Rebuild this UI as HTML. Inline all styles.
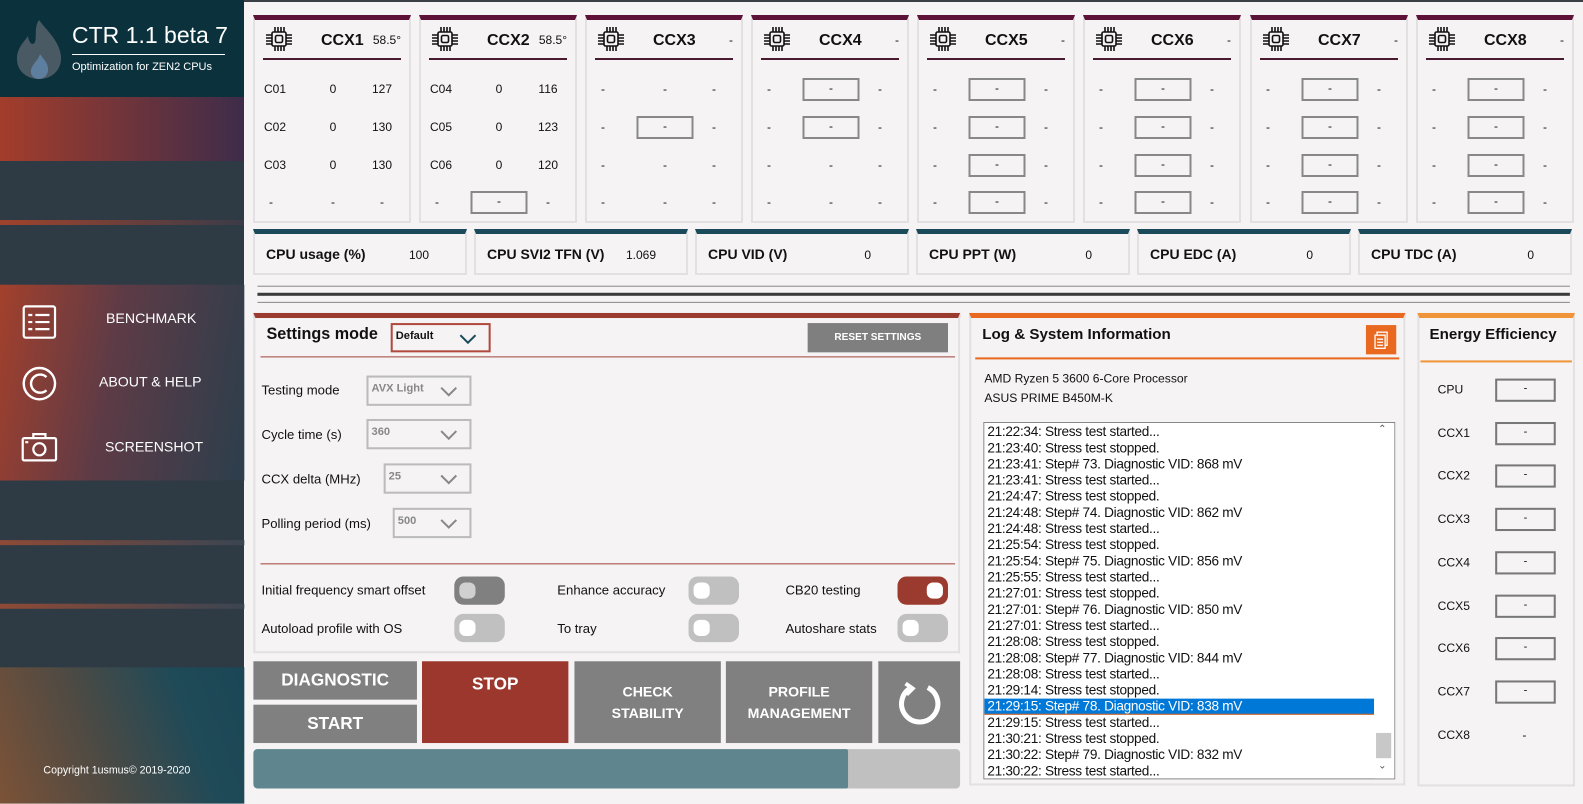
<!DOCTYPE html>
<html><head><meta charset="utf-8"><style>
*{box-sizing:border-box;margin:0;padding:0}
body{width:1583px;height:796px;overflow:hidden;background:#f5f3f3;font-family:"Liberation Sans",sans-serif;font-size:13px;color:#111;position:relative}
.a{position:absolute}
#wrap{position:absolute;left:0;top:0;width:1583px;height:796px;transform:scale(1.00957);transform-origin:0 0}
.pan{position:absolute;background:#f5f3f3;border:2px solid #e2e0e0}
.ccx{top:15px;width:158px;height:208px;border-top:5px solid #5e1238}
.ccx .hd{position:absolute;left:8px;right:8px;top:0;height:40px;border-bottom:2px solid #4a1a30}
.ccx .ic{position:absolute;left:2px;top:5px}
.ccx .t{position:absolute;left:58px;top:12px;font-weight:bold;font-size:16px}
.ccx .tp{position:absolute;right:0;top:13px;font-size:12px}
.c{position:absolute;font-size:12px;transform:translateX(-50%)}
.bx{position:absolute;width:57px;height:23px;border:2px solid #888;transform:translateX(-50%);text-align:center;font-size:12px;line-height:17px}
.st{top:229px;width:214px;height:46px;border-top:5px solid #1b4a5a}
.st b{position:absolute;left:11px;top:12px;font-size:14px}
.st span{position:absolute;right:36px;top:14px;font-size:12px}
.dd{position:absolute;height:30px;border:2px solid #bbb;font-size:11px;color:#888;font-weight:bold;padding:5px 0 0 3px}
.dd svg{position:absolute;right:12px;top:9px}
.lb{position:absolute;font-size:13px}
.tg{position:absolute;width:50px;height:28px;border-radius:9px;background:#c0c0c0}
.tg i{position:absolute;top:6px;left:5px;width:16px;height:16px;border-radius:6px;background:#fff}
.btn{position:absolute;background:#808080;color:#fff;font-weight:bold;text-align:center}
.log div{height:16px;line-height:16px;font-size:13.5px;letter-spacing:-0.3px;padding-left:3px;white-space:nowrap}
</style></head><body>
<div class="a" style="left:0;top:0;width:1583px;height:2px;background:#3a3f45"></div>
<div class="a" style="left:0;top:0;width:244px;height:796px;background:#2e3a44"></div>
<div class="a" style="left:0;top:0;width:244px;height:97px;background:#0b323c"></div>
<div class="a" style="left:0;top:97px;width:244px;height:64px;background:linear-gradient(90deg,#a33d2b,#3e2c4a)"></div>
<div class="a" style="left:0;top:220px;width:244px;height:5px;background:linear-gradient(90deg,#a0432c,#3b3b48)"></div>
<svg class="a" style="left:14px;top:18px" width="50" height="62" viewBox="0 0 50 62"><path d="M25 2 C32 12 45 22 47 38 C48 52 38 61 25 61 C12 61 2 52 3 39 C4 29 10 24 14 18 C15 26 19 28 21 24 C23 18 20 9 25 2Z" fill="#4a5a64"/><path d="M26 36 C30 42 35 46 34 53 C33 58 29 61 25 61 C20 61 16 57 17 52 C18 46 24 43 26 36Z" fill="#5e7ea0"/></svg>
<div class="a" style="left:72px;top:22px;color:#fff;font-size:23px">CTR 1.1 beta 7</div>
<div class="a" style="left:72px;top:54px;width:153px;height:1px;background:#fff"></div>
<div class="a" style="left:72px;top:61px;color:#fff;font-size:11px">Optimization for ZEN2 CPUs</div>

<svg width="0" height="0" style="position:absolute"><defs><g id="chip" fill="none" stroke="#111" stroke-width="1.6"><rect x="7" y="7" width="14" height="14" rx="1.5"/><rect x="10.5" y="10.5" width="7" height="7" rx="1.5"/><path d="M10 2v5M13 2v5M16 2v5M19 2v5M10 21v5M13 21v5M16 21v5M19 21v5M1 10h6M1 13h6M1 16h6M1 19h6M21 10h6M21 13h6M21 16h6M21 19h6"/></g></defs></svg>
<div id="ccxs"></div>

<div class="pan st" style="left:253px"><b>CPU usage (%)</b><span>100</span></div>
<div class="pan st" style="left:474px"><b>CPU SVI2 TFN (V)</b><span style="right:30px">1.069</span></div>
<div class="pan st" style="left:695px"><b>CPU VID (V)</b><span>0</span></div>
<div class="pan st" style="left:916px"><b>CPU PPT (W)</b><span>0</span></div>
<div class="pan st" style="left:1137px"><b>CPU EDC (A)</b><span>0</span></div>
<div class="pan st" style="left:1358px"><b>CPU TDC (A)</b><span>0</span></div>

<div id="wrap">
<div class="a" style="left:0;top:282px;width:242px;height:194px;background:linear-gradient(100deg,#a3402c 0%,#5d3b46 45%,#2c3e4c 100%)"></div>
<div class="a" style="left:0;top:535px;width:242px;height:5px;background:linear-gradient(90deg,#8e4a36,#3b4552)"></div>
<div class="a" style="left:0;top:598px;width:242px;height:5px;background:linear-gradient(90deg,#8e4a36,#3b4552)"></div>
<div class="a" style="left:0;top:661px;width:242px;height:135px;background:linear-gradient(70deg,#7c5237 0%,#4c4a44 40%,#1f4a58 75%,#1b4655 100%)"></div>
<svg class="a" style="left:22px;top:302px" width="34" height="34" viewBox="0 0 34 34" fill="none" stroke="#fff" stroke-width="2.2"><rect x="1.5" y="1.5" width="31" height="31" rx="2"/><path d="M6 10h4M13 10h14M6 17h4M13 17h14M6 24h4M13 24h14"/></svg>
<div class="a" style="left:105px;top:307px;color:#fff;font-size:14px">BENCHMARK</div>
<svg class="a" style="left:21px;top:362px" width="36" height="36" viewBox="0 0 36 36" fill="none" stroke="#fff" stroke-width="2.4"><circle cx="18" cy="18" r="15.5"/><path d="M25 11.5a9 9 0 1 0 0 13"/></svg>
<div class="a" style="left:98px;top:370px;color:#fff;font-size:14px">ABOUT &amp; HELP</div>
<svg class="a" style="left:21px;top:428px" width="36" height="30" viewBox="0 0 36 30" fill="none" stroke="#fff" stroke-width="2.2"><rect x="1.5" y="6" width="33" height="22" rx="1.5"/><path d="M12 6V2h12v4M4 10h3"/><circle cx="18" cy="17" r="6"/></svg>
<div class="a" style="left:104px;top:434px;color:#fff;font-size:14px">SCREENSHOT</div>
<div class="a" style="left:43px;top:757px;color:#fff;font-size:10.5px">Copyright 1usmus© 2019-2020</div>

<div class="a" style="left:255px;top:283px;width:1300px;height:1px;background:#888"></div>
<div class="a" style="left:255px;top:290px;width:1300px;height:3px;background:#3a3a3a"></div>
<div class="a" style="left:255px;top:299px;width:1300px;height:1px;background:#888"></div>

<div class="pan" style="left:251px;top:310px;width:700px;height:337px;border-top:5px solid #9b3a2e"></div>
<div class="a" style="left:264px;top:323px;font-weight:bold;font-size:16px">Settings mode</div>
<div class="a" style="left:387px;top:320px;width:99px;height:29px;border:2px solid #b04a3e;font-size:11px;font-weight:bold;padding:5px 0 0 3px">Default<svg class="a" style="right:12px;top:9px" width="17" height="10"><path d="M1 1l7.5 7.5L16 1" fill="none" stroke="#1b4a5a" stroke-width="2"/></svg></div>
<div class="btn" style="left:800px;top:320px;width:139px;height:29px;font-size:10px;line-height:29px;background:#7f7f7f">RESET SETTINGS</div>
<div class="a" style="left:258px;top:353px;width:688px;height:1px;background:#a0453a"></div>
<div class="lb" style="left:259px;top:379px">Testing mode</div>
<div class="dd" style="left:363px;top:372px;width:104px">AVX Light<svg width="17" height="10"><path d="M1 1l7.5 7.5L16 1" fill="none" stroke="#888" stroke-width="2"/></svg></div>
<div class="lb" style="left:259px;top:423px">Cycle time (s)</div>
<div class="dd" style="left:363px;top:415px;width:104px">360<svg width="17" height="10"><path d="M1 1l7.5 7.5L16 1" fill="none" stroke="#888" stroke-width="2"/></svg></div>
<div class="lb" style="left:259px;top:467px">CCX delta (MHz)</div>
<div class="dd" style="left:380px;top:459px;width:87px">25<svg width="17" height="10"><path d="M1 1l7.5 7.5L16 1" fill="none" stroke="#888" stroke-width="2"/></svg></div>
<div class="lb" style="left:259px;top:511px">Polling period (ms)</div>
<div class="dd" style="left:389px;top:503px;width:78px">500<svg width="17" height="10"><path d="M1 1l7.5 7.5L16 1" fill="none" stroke="#888" stroke-width="2"/></svg></div>
<div class="a" style="left:258px;top:558px;width:688px;height:1px;background:#a0453a"></div>
<div class="lb" style="left:259px;top:577px">Initial frequency smart offset</div>
<div class="tg" style="left:450px;top:571px;background:#808080"><i style="background:#d0d0d0"></i></div>
<div class="lb" style="left:259px;top:615px">Autoload profile with OS</div>
<div class="tg" style="left:450px;top:608px"><i></i></div>
<div class="lb" style="left:552px;top:577px">Enhance accuracy</div>
<div class="tg" style="left:682px;top:571px"><i></i></div>
<div class="lb" style="left:778px;top:577px">CB20 testing</div>
<div class="tg" style="left:889px;top:571px;background:#9b3a2e"><i style="left:auto;right:5px"></i></div>
<div class="lb" style="left:552px;top:615px">To tray</div>
<div class="tg" style="left:682px;top:608px"><i></i></div>
<div class="lb" style="left:778px;top:615px">Autoshare stats</div>
<div class="tg" style="left:889px;top:608px"><i></i></div>

<div class="btn" style="left:251px;top:655px;width:162px;height:38px;font-size:17px;line-height:37px">DIAGNOSTIC</div>
<div class="btn" style="left:251px;top:698px;width:162px;height:38px;font-size:17px;line-height:37px">START</div>
<div class="btn" style="left:418px;top:655px;width:145px;height:81px;background:#9b372d;font-size:17px;line-height:46px">STOP</div>
<div class="btn" style="left:569px;top:655px;width:145px;height:81px;font-size:14px;line-height:21px;padding-top:20px">CHECK<br>STABILITY</div>
<div class="btn" style="left:719px;top:655px;width:145px;height:81px;font-size:14px;line-height:21px;padding-top:20px">PROFILE<br>MANAGEMENT</div>
<div class="btn" style="left:870px;top:655px;width:81px;height:81px"><svg style="margin-top:19px" width="44" height="44" viewBox="0 0 44 44" fill="none" stroke="#fff" stroke-width="5"><path d="M14 7A18 18 0 1 0 30 7"/><path d="M8 3l7 5-6 6" stroke-width="4"/></svg></div>
<div class="a" style="left:251px;top:742px;width:700px;height:39px;background:#c0c0c0;border-radius:4px"></div>
<div class="a" style="left:251px;top:742px;width:589px;height:39px;background:#5f858f;border-radius:4px 2px 2px 4px"></div>

<div class="pan" style="left:960px;top:310px;width:432px;height:468px;border-top:5px solid #e8691f"></div>
<div class="a" style="left:973px;top:323px;font-weight:bold;font-size:15px">Log &amp; System Information</div>
<div class="a" style="left:1353px;top:322px;width:30px;height:29px;background:#e8691f"><svg style="margin:6px 0 0 8px" width="14" height="18" viewBox="0 0 14 18" fill="none" stroke="#fff" stroke-width="1.3"><rect x="3" y="1" width="10" height="13"/><rect x="1" y="4" width="10" height="13" fill="#e8691f"/><path d="M3 8h6M3 11h6M3 14h6"/></svg></div>
<div class="a" style="left:966px;top:354px;width:420px;height:2px;background:#e8691f"></div>
<div class="a" style="left:975px;top:368px;font-size:12px">AMD Ryzen 5 3600 6-Core Processor</div>
<div class="a" style="left:975px;top:387px;font-size:12px">ASUS PRIME B450M-K</div>
<div class="a log" style="left:974px;top:418px;width:408px;height:354px;background:#fff;border:1px solid #888;padding-top:1px;overflow:hidden">
<div>21:22:34: Stress test started...</div>
<div>21:23:40: Stress test stopped.</div>
<div>21:23:41: Step# 73. Diagnostic VID: 868 mV</div>
<div>21:23:41: Stress test started...</div>
<div>21:24:47: Stress test stopped.</div>
<div>21:24:48: Step# 74. Diagnostic VID: 862 mV</div>
<div>21:24:48: Stress test started...</div>
<div>21:25:54: Stress test stopped.</div>
<div>21:25:54: Step# 75. Diagnostic VID: 856 mV</div>
<div>21:25:55: Stress test started...</div>
<div>21:27:01: Stress test stopped.</div>
<div>21:27:01: Step# 76. Diagnostic VID: 850 mV</div>
<div>21:27:01: Stress test started...</div>
<div>21:28:08: Stress test stopped.</div>
<div>21:28:08: Step# 77. Diagnostic VID: 844 mV</div>
<div>21:28:08: Stress test started...</div>
<div>21:29:14: Stress test stopped.</div>
<div style="background:#0078d7;color:#fff;width:386px;border-bottom:1px solid #e8691f">21:29:15: Step# 78. Diagnostic VID: 838 mV</div>
<div>21:29:15: Stress test started...</div>
<div>21:30:21: Stress test stopped.</div>
<div>21:30:22: Step# 79. Diagnostic VID: 832 mV</div>
<div>21:30:22: Stress test started...</div>
</div>
<div class="a" style="left:1362px;top:419px;width:19px;height:352px;background:#fff"></div>
<div class="a" style="left:1363px;top:726px;width:15px;height:25px;background:#c8c8c8"></div>
<div class="a" style="left:1365px;top:420px;font-size:10px;color:#555">&#8963;</div>
<div class="a" style="left:1365px;top:753px;font-size:10px;color:#555">&#8964;</div>

<div class="pan" style="left:1404px;top:310px;width:156px;height:469px;border-top:5px solid #f0943a"></div>
<div class="a" style="left:1416px;top:323px;font-weight:bold;font-size:15px">Energy Efficiency</div>
<div class="a" style="left:1407px;top:357px;width:150px;height:2px;background:#f0943a"></div>
<div id="ee"></div>
</div>
<script>
var h='',xs=[253,419,585,751,917,1083,1250,1416],temps=['58.5°','58.5°','-','-','-','-','-','-'];
var data=[[['C01','0','127'],['C02','0','130'],['C03','0','130'],['-','-','-']],[['C04','0','116'],['C05','0','123'],['C06','0','120'],['-','B','-']]];
var boxes=[[],[3],[1],[0,1],[0,1,2,3],[0,1,2,3],[0,1,2,3],[0,1,2,3]];
var ry=[77,115,153,190];
for(var i=0;i<8;i++){var x=xs[i];
h+='<div class="pan ccx" style="left:'+x+'px"><div class="hd"><svg class="ic" width="28" height="28"><use href="#chip"/></svg><span class="t">CCX'+(i+1)+'</span><span class="tp">'+temps[i]+'</span></div>';
for(var r=0;r<4;r++){var row=data[i]?data[i][r]:['-','-','-'];var y=ry[r]-15;
 h+='<span class="c" style="left:16px;top:'+y+'px;'+(row[0]!='-'?'transform:none;left:9px':'')+'">'+row[0]+'</span>';
 if(boxes[i].indexOf(r)>=0) h+='<div class="bx" style="left:78px;top:'+(y-4)+'px">-</div>';
 else h+='<span class="c" style="left:78px;top:'+y+'px">'+row[1]+'</span>';
 h+='<span class="c" style="left:127px;top:'+y+'px">'+row[2]+'</span>';}
h+='</div>';}
document.getElementById('ccxs').innerHTML=h;
var e='',l=['CPU','CCX1','CCX2','CCX3','CCX4','CCX5','CCX6','CCX7','CCX8'];
for(var k=0;k<9;k++){var y=379+k*42.7;
e+='<div class="a" style="left:1424px;top:'+y+'px;font-size:12px">'+l[k]+'</div>';
if(k<8)e+='<div class="a" style="left:1481px;top:'+(y-4)+'px;width:60px;height:23px;border:2px solid #777;text-align:center;font-size:11px;line-height:17px">-</div>';
else e+='<div class="a" style="left:1508px;top:'+y+'px;font-size:12px">-</div>';}
document.getElementById('ee').innerHTML=e;
</script>
</body></html>
